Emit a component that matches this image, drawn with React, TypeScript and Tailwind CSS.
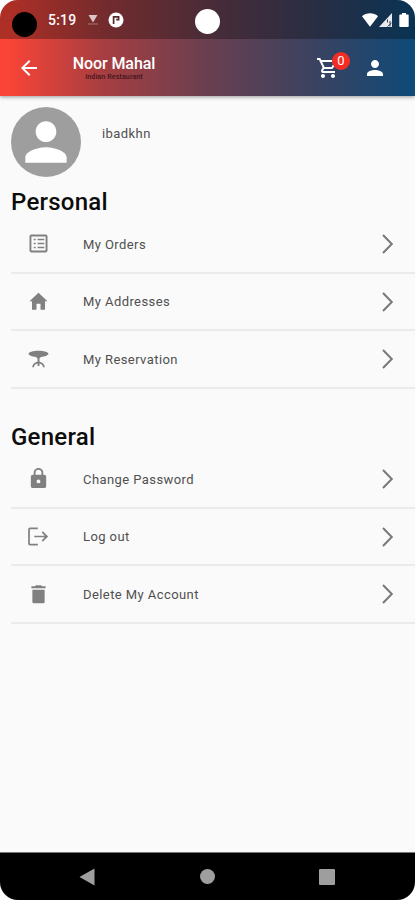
import type { ReactNode } from "react";

interface IconProps {
  d: string;
  className?: string;
}

const Icon = ({ d, className = "h-6 w-6" }: IconProps) => (
  <svg viewBox="0 0 24 24" fill="currentColor" fillRule="evenodd" className={className}>
    <path d={d} />
  </svg>
);

const PERSON = "M12 12c2.21 0 4-1.79 4-4s-1.79-4-4-4-4 1.79-4 4 1.79 4 4 4zm0 2c-2.67 0-8 1.34-8 4v2h16v-2c0-2.66-5.33-4-8-4z";
const BACK = "M20 11H7.83l5.59-5.59L12 4l-8 8 8 8 1.41-1.41L7.83 13H20v-2z";
const CART =
  "M15.55 13c.75 0 1.41-.41 1.75-1.03l3.58-6.49A.996.996 0 0 0 20.01 4H5.21l-.94-2H1v2h2l3.6 7.59-1.35 2.44C4.52 15.37 5.48 17 7 17h12v-2H7l1.1-2h7.45zM6.16 6h12.15l-2.76 5H8.53L6.16 6zM7 18c-1.1 0-1.99.9-1.99 2S5.9 22 7 22s2-.9 2-2-.9-2-2-2zm10 0c-1.1 0-1.99.9-1.99 2s.89 2 1.99 2 2-.9 2-2-.9-2-2-2z";
const LIST =
  "M4.6 2.6h14.8c1.1 0 2 .9 2 2v14.8c0 1.1-.9 2-2 2H4.6c-1.1 0-2-.9-2-2V4.6c0-1.1.9-2 2-2zM4.6 4.6v14.8h14.8V4.6zM11 7h7v1.6h-7V7zm0 4.2h7v1.6h-7v-1.6zm0 4.2h7V17h-7v-1.6zM7 7h2v1.6H7V7zm0 4.2h2v1.6H7v-1.6zm0 4.2h2V17H7v-1.6z";
const HOME = "M12 2.9L2.6 11.8H5.2V20.6H9.9V14.4H14.1V20.6H18.8V11.8H21.4z";
const TABLE =
  "M12 2.8c5.7 0 10.4 1.4 10.4 3.3 0 1.6-3.3 2.9-7.8 3.2L13 11v3.2l2.2.8c1.9.7 3 2.3 3.4 5.2h-1.8c-.4-2-1.2-3.1-2.4-3.5l-1.4-.4v2.4h-2v-2.4l-1.4.4c-1.2.4-2 1.5-2.4 3.5H5.4c.4-2.9 1.5-4.5 3.4-5.2l2.2-.8V11L9.4 9.3C4.9 9 1.6 7.7 1.6 6.1c0-1.9 4.7-3.3 10.4-3.3z";
const LOCK =
  "M18 8h-1V6c0-2.76-2.24-5-5-5S7 3.24 7 6v2H6c-1.1 0-2 .9-2 2v10c0 1.1.9 2 2 2h12c1.1 0 2-.9 2-2V10c0-1.1-.9-2-2-2zm-6 9c-1.1 0-2-.9-2-2s.9-2 2-2 2 .9 2 2-.9 2-2 2zm3.1-9H8.9V6c0-1.71 1.39-3.1 3.1-3.1s3.1 1.39 3.1 3.1v2z";
const LOGOUT =
  "M11.3 2.7H3.2C2 2.7 1.2 3.5 1.2 4.7v14.6c0 1.2.8 2 2 2h8.1v-1.8H3V4.5h8.3zM16.5 6.6l-1.2 1.3 3.2 3.2H7.6v1.8h10.9l-3.2 3.2 1.2 1.3 5.6-5.4z";
const TRASH = "M5.6 7H18.4V19.6c0 1-.8 1.6-1.8 1.6H7.4c-1 0-1.8-.6-1.8-1.6zM19.4 3.4h-3.7l-1-1H9.3l-1 1H4.6v2h14.8z";

const personal = [
  { label: "My Orders", icon: LIST },
  { label: "My Addresses", icon: HOME },
  { label: "My Reservation", icon: TABLE },
];

const general = [
  { label: "Change Password", icon: LOCK },
  { label: "Log out", icon: LOGOUT },
  { label: "Delete My Account", icon: TRASH },
];

const StatusBar = () => (
  <div className="flex h-[39px] items-center bg-black/30 text-white">
    <div className="ml-3 mt-[9px] h-[25px] w-[25px] rounded-full bg-black" />
    <span className="ml-[11px] mt-[2px] w-[39px] text-[14px] font-medium tracking-[0.2px]">5:19</span>
    <svg viewBox="0 0 12 12" className="h-3 w-3" fill="none">
      <path d="M1.5 1H10.5L6 8.5z" fill="#d8c5c5" />
      <path d="M1 10H11" stroke="#a87474" />
    </svg>
    <svg viewBox="0 0 16 16" className="ml-[9px] mt-px h-4 w-4">
      <circle cx="8" cy="8" r="7.5" fill="#fff" />
      <path d="M5.6 12V4.8H10.6V7.6H8.2" fill="none" stroke="#572a2c" strokeWidth="1.7" />
    </svg>
    <div className="ml-[71px] mt-[4px] h-[25px] w-[25px] rounded-full bg-white" />
    <div className="ml-auto mr-[6px] mt-[1px] flex items-center">
      <svg viewBox="0 0 16 14" className="h-[14px] w-4" fill="#fff">
        <path d="M0 3.2C4.6-.6 11.4-.6 16 3.2L8 13.8z" />
      </svg>
      <svg viewBox="0 0 14 14" className="ml-px h-[14px] w-[14px]">
        <path d="M0 14L13 0V14z" fill="#e8ebf0" />
        <path d="M8.5 6.5v3M8.5 13.5l4-3.5M11 13.5V8" stroke="#314057" strokeWidth="1" />
      </svg>
      <svg viewBox="0 0 10 14" className="ml-[6px] h-[14px] w-[10px]" fill="#fff">
        <path d="M3 0H7V1.6H9Q9.7 1.6 9.7 2.4V13Q9.7 14 9 14H1Q.3 14 .3 13V2.4Q.3 1.6 1 1.6H3z" />
      </svg>
    </div>
  </div>
);

const AppBar = () => (
  <div className="flex h-[57px] items-center text-white">
    <Icon d={BACK} className="ml-[17px] h-6 w-6" />
    <div className="ml-8 mt-px flex w-[82px] flex-col items-center whitespace-nowrap">
      <span className="text-[16px] font-medium leading-[18px] tracking-[-0.1px]">Noor Mahal</span>
      <span className="text-[7px] font-medium leading-[8px] tracking-[0.15px] text-[#42151b]">Indian Restaurant</span>
    </div>
    <div className="relative ml-auto">
      <Icon d={CART} />
      <span className="absolute left-[16px] top-[-4px] flex h-[18px] w-[18px] items-center justify-center rounded-full bg-[#f32d24] text-[13px] leading-none">
        0
      </span>
    </div>
    <Icon d={PERSON} className="ml-[23px] mr-[28px] h-6 w-6" />
  </div>
);

const Row = ({ label, icon }: { label: string; icon: string }) => (
  <div className="flex h-[57.7px] items-center border-b-2 border-[#ebebeb] text-[#808080]">
    <Icon d={icon} className="ml-4 h-[23px] w-[23px]" />
    <span className="ml-[33px] mt-px text-[13px] tracking-[0.42px] text-[#505050]">{label}</span>
    <svg viewBox="0 0 12 20" className="ml-auto mr-[21px] h-5 w-3" fill="none">
      <path d="M1 1L9.8 10L1 19" stroke="#787878" strokeWidth="2" />
    </svg>
  </div>
);

const Section = ({ title, children }: { title: string; children: ReactNode }) => (
  <section className="ml-[11px]">
    <h2 className="h-[28px] text-[24px] font-medium leading-[28px] tracking-[0.25px] text-[#0c0c0c]">{title}</h2>
    {children}
  </section>
);

export default function App() {
  return (
    <div className="h-[900px] w-[415px] bg-white font-[Roboto,sans-serif]">
      <div className="flex h-full flex-col overflow-hidden rounded-[18px] bg-[#fafafa]">
        <header className="z-10 h-24 shrink-0 bg-[linear-gradient(to_right,#f94437_2%,#a63e41_25%,#6a3f50_50%,#3c4260_75%,#0e4a78_100%)] shadow-[0_1px_4px_rgba(0,0,0,0.4)]">
          <StatusBar />
          <AppBar />
        </header>
        <main className="flex-1">
          <div className="flex h-[92px] pl-[11px] pt-[11px]">
            <div className="flex h-[70px] w-[70px] items-center justify-center rounded-full bg-[#9e9e9e] text-white">
              <Icon d={PERSON} className="h-[62px] w-[62px]" />
            </div>
            <span className="ml-[21px] mt-[17px] text-[13px] leading-5 tracking-[0.42px] text-[#505050]">ibadkhn</span>
          </div>
          <Section title="Personal">
            {personal.map((item) => (
              <Row key={item.label} {...item} />
            ))}
          </Section>
          <div className="h-[34px]" />
          <Section title="General">
            {general.map((item) => (
              <Row key={item.label} {...item} />
            ))}
          </Section>
        </main>
        <nav className="flex h-[48px] shrink-0 items-center border-t border-[#777] bg-black text-[#9e9e9e]">
          <svg viewBox="0 0 16 18" className="ml-[79px] h-[18px] w-4" fill="currentColor">
            <path d="M.5 9L15.5.5V17.5z" />
          </svg>
          <div className="ml-[105px] h-[15px] w-[15px] rounded-full bg-[#9e9e9e]" />
          <div className="ml-[104px] h-4 w-4 rounded-[1px] bg-[#9e9e9e]" />
        </nav>
      </div>
    </div>
  );
}
